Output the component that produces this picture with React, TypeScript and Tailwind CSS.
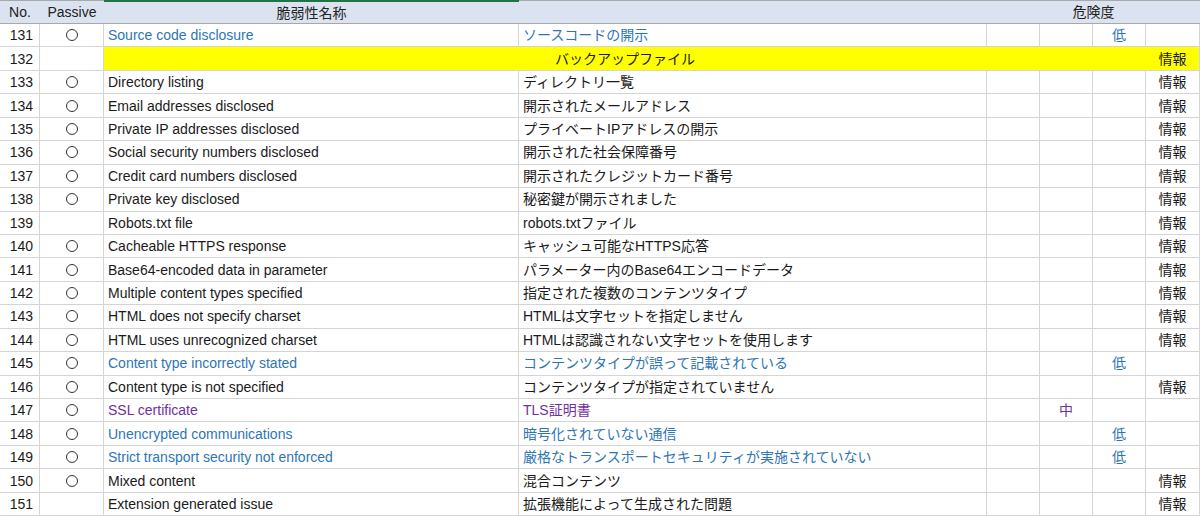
const rows: [number, boolean, string, string, string, string][] = [
  [131, true, "Source code disclosure", "ソースコードの開示", "low", "blue"],
  [132, false, "", "バックアップファイル", "info", "yellow"],
  [133, true, "Directory listing", "ディレクトリ一覧", "info", ""],
  [134, true, "Email addresses disclosed", "開示されたメールアドレス", "info", ""],
  [135, true, "Private IP addresses disclosed", "プライベートIPアドレスの開示", "info", ""],
  [136, true, "Social security numbers disclosed", "開示された社会保障番号", "info", ""],
  [137, true, "Credit card numbers disclosed", "開示されたクレジットカード番号", "info", ""],
  [138, true, "Private key disclosed", "秘密鍵が開示されました", "info", ""],
  [139, false, "Robots.txt file", "robots.txtファイル", "info", ""],
  [140, true, "Cacheable HTTPS response", "キャッシュ可能なHTTPS応答", "info", ""],
  [141, true, "Base64-encoded data in parameter", "パラメーター内のBase64エンコードデータ", "info", ""],
  [142, true, "Multiple content types specified", "指定された複数のコンテンツタイプ", "info", ""],
  [143, true, "HTML does not specify charset", "HTMLは文字セットを指定しません", "info", ""],
  [144, true, "HTML uses unrecognized charset", "HTMLは認識されない文字セットを使用します", "info", ""],
  [145, true, "Content type incorrectly stated", "コンテンツタイプが誤って記載されている", "low", "blue"],
  [146, true, "Content type is not specified", "コンテンツタイプが指定されていません", "info", ""],
  [147, true, "SSL certificate", "TLS証明書", "mid", "purple"],
  [148, true, "Unencrypted communications", "暗号化されていない通信", "low", "blue"],
  [149, true, "Strict transport security not enforced", "厳格なトランスポートセキュリティが実施されていない", "low", "blue"],
  [150, true, "Mixed content", "混合コンテンツ", "info", ""],
  [151, false, "Extension generated issue", "拡張機能によって生成された問題", "info", ""],
];

const cell = "border-r border-b border-[#d4d4d4] flex items-center h-[23.45px] overflow-hidden whitespace-nowrap";

function Row({ r }: { r: (typeof rows)[number] }) {
  const [no, passive, en, ja, risk, tone] = r;
  const color = tone === "blue" ? "text-[#2e75b6]" : tone === "purple" ? "text-[#7030a0]" : "text-[#1a1a1a]";
  const riskColor = risk === "low" ? "text-[#2e75b6]" : risk === "mid" ? "text-[#7030a0]" : "text-[#1a1a1a]";
  if (tone === "yellow") {
    return (
      <>
        <div className={`${cell} justify-end pr-[6px] text-[#1a1a1a]`}>{no}</div>
        <div className={cell} />
        <div className={`${cell} col-span-5 justify-center bg-[#ffff00] border-r-0 text-[#1a1a1a]`}>{ja}</div>
        <div className={`${cell} justify-center bg-[#ffff00] text-[#1a1a1a]`}>情報</div>
      </>
    );
  }
  return (
    <>
      <div className={`${cell} justify-end pr-[6px] text-[#1a1a1a]`}>{no}</div>
      <div className={`${cell} justify-center`}>
        {passive && <span className="w-[12px] h-[12px] rounded-full border border-[#333]" />}
      </div>
      <div className={`${cell} pl-[4px] ${color}`}>{en}</div>
      <div className={`${cell} pl-[4px] ${color}`}>{ja}</div>
      <div className={cell} />
      <div className={`${cell} justify-center ${riskColor}`}>{risk === "mid" ? "中" : ""}</div>
      <div className={`${cell} justify-center ${riskColor}`}>{risk === "low" ? "低" : ""}</div>
      <div className={`${cell} justify-center text-[#1a1a1a]`}>{risk === "info" ? "情報" : ""}</div>
    </>
  );
}

export default function App() {
  return (
    <div className="w-[1200px] h-[516px] overflow-hidden bg-white text-[14px] leading-none" style={{ fontFamily: '"Liberation Sans", "Noto Sans CJK JP", sans-serif' }}>
      <div className="grid grid-cols-[40px_64px_415px_468px_53px_53px_53px_54px]">
        <div className="h-[24px] bg-[#dce3f0] border-t border-b border-[#a8a8a8] flex items-center justify-center text-[#222]">No.</div>
        <div className="h-[24px] bg-[#dce3f0] border-t border-b border-[#a8a8a8] flex items-center justify-center text-[#222]">Passive</div>
        <div className="h-[24px] bg-[#dce3f0] border-t-2 border-t-[#217346] border-b border-[#a8a8a8] flex items-center justify-center text-[#222]">脆弱性名称</div>
        <div className="h-[24px] bg-[#dce3f0] border-t border-b border-[#a8a8a8]" />
        <div className="col-span-4 h-[24px] bg-[#dce3f0] border-t border-b border-[#a8a8a8] flex items-center justify-center text-[#222]">危険度</div>
        {rows.map((r) => (
          <Row key={r[0]} r={r} />
        ))}
      </div>
    </div>
  );
}
